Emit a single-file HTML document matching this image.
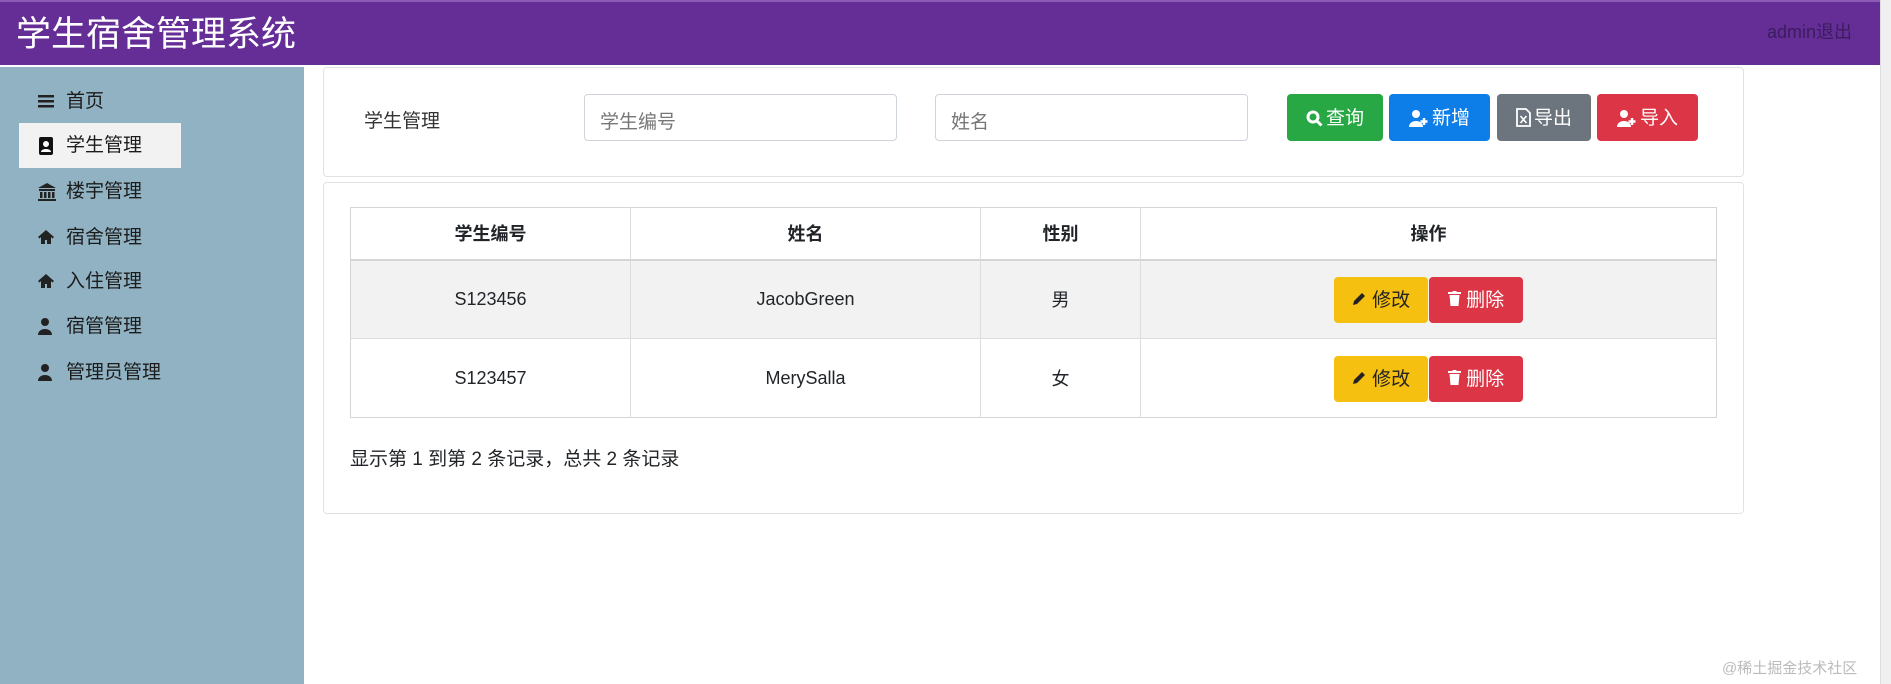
<!DOCTYPE html>
<html><head><meta charset="utf-8">
<style>
*{box-sizing:border-box;margin:0;padding:0}
body{width:1891px;height:684px;overflow:hidden;background:#fff;font-family:"Liberation Sans","Noto Sans CJK SC",sans-serif;position:relative;color:#212529}
.hdr{position:absolute;left:0;top:0;width:1880px;height:65px;background:#652e97;border-top:2px solid #8a5ab5}
.title{position:absolute;left:16px;top:12px;font-size:35px;color:#fff;line-height:42px}
.admin{position:absolute;left:1767px;top:16px;font-size:18px;color:#3b1c5e}
.rs{position:absolute;left:1880px;top:0;width:11px;height:684px;background:#f0f0f0;border-left:1px solid #ddd}
.side{position:absolute;left:0;top:67px;width:304px;height:617px;background:#90b2c2}
.mi{position:absolute;left:19px;height:45px;width:162px;font-size:19px;line-height:45px;padding-left:47px;color:#1c1c1c}
.mi.act{background:#f2f2f2}
.mi svg{position:absolute;left:19px;top:14px}
.panel{position:absolute;left:323px;width:1421px;border:1px solid #e2e2e2;border-radius:4px;background:#fff}
.lbl{position:absolute;left:364px;top:106px;font-size:19px;color:#333}
.inp{position:absolute;top:94px;height:47px;width:313px;border:1px solid #ced4da;border-radius:4px;font-size:19px;color:#777;padding:12px 15px}
.btn{position:absolute;height:47px;border-radius:4px;color:#fff;font-size:19px;line-height:50px;text-align:center}
.btn svg{vertical-align:-3px;margin-right:3px}
table{position:absolute;left:350px;top:207px;width:1367px;border-collapse:collapse;border:1px solid #d5d5d5;font-size:18px}
th,td{border-left:1px solid #ddd;text-align:center}
th{height:52px;font-weight:bold;border-bottom:2px solid #d5d5d5}
td{height:79px;border-top:1px solid #ddd}
tr.g td{background:#f2f2f2}
.sb{position:absolute;height:46px;width:94px;border-radius:4px;font-size:19px;line-height:48px;text-align:center}
.foot{position:absolute;left:350px;top:444px;font-size:19px}
.wm{position:absolute;left:1722px;top:657px;font-size:15px;color:#bbb}
</style></head><body>
<div class="hdr"><div class="title">学生宿舍管理系统</div><div class="admin">admin退出</div></div>
<div class="rs"></div>
<div class="side">
<div class="mi" style="top:12px"><svg width="16" height="16" viewBox="0 0 16 16"><rect x="0" y="2" width="16" height="2.5" fill="#222"/><rect x="0" y="7" width="16" height="2.5" fill="#222"/><rect x="0" y="12" width="16" height="2.5" fill="#222"/></svg>首页</div>
<div class="mi act" style="top:56px"><svg width="16" height="18" viewBox="0 0 16 18"><rect x="1" y="0" width="14" height="18" rx="2" fill="#111"/><circle cx="8" cy="7" r="3" fill="#fff"/><path d="M3 15c0-4 10-4 10 0z" fill="#fff"/></svg>学生管理</div>
<div class="mi" style="top:102px"><svg width="18" height="18" viewBox="0 0 18 18"><path d="M9 0L0 5h18z" fill="#222"/><rect x="1" y="6" width="16" height="2" fill="#222"/><rect x="2" y="9" width="2.5" height="6" fill="#222"/><rect x="6" y="9" width="2.5" height="6" fill="#222"/><rect x="10" y="9" width="2.5" height="6" fill="#222"/><rect x="14" y="9" width="2.5" height="6" fill="#222"/><rect x="0" y="16" width="18" height="2" fill="#222"/></svg>楼宇管理</div>
<div class="mi" style="top:148px"><svg width="16" height="16" viewBox="0 0 16 16"><path d="M8 1L0 8l1.5 1.5L3 8v7h4v-4h2v4h4V8l1.5 1.5L16 8z" fill="#222"/></svg>宿舍管理</div>
<div class="mi" style="top:192px"><svg width="16" height="16" viewBox="0 0 16 16"><path d="M8 1L0 8l1.5 1.5L3 8v7h4v-4h2v4h4V8l1.5 1.5L16 8z" fill="#222"/></svg>入住管理</div>
<div class="mi" style="top:237px"><svg width="14" height="17" viewBox="0 0 14 17"><circle cx="7" cy="4" r="4" fill="#222"/><path d="M0 17c0-8 14-8 14 0z" fill="#222"/></svg>宿管管理</div>
<div class="mi" style="top:283px"><svg width="14" height="17" viewBox="0 0 14 17"><circle cx="7" cy="4" r="4" fill="#222"/><path d="M0 17c0-8 14-8 14 0z" fill="#222"/></svg>管理员管理</div>
</div>
<div class="panel" style="top:67px;height:110px"></div>
<div class="lbl">学生管理</div>
<div class="inp" style="left:584px">学生编号</div>
<div class="inp" style="left:935px">姓名</div>
<div class="btn" style="left:1287px;top:94px;width:96px;background:#28a745"><svg width="17" height="17" viewBox="0 0 17 17"><circle cx="7" cy="7" r="5" fill="none" stroke="#fff" stroke-width="3"/><path d="M10.5 10.5l5 5" stroke="#fff" stroke-width="3"/></svg>查询</div>
<div class="btn" style="left:1389px;top:94px;width:101px;background:#0d7ee8"><svg width="20" height="17" viewBox="0 0 20 17"><circle cx="7" cy="4" r="4" fill="#fff"/><path d="M0 17c0-8 14-8 14 0z" fill="#fff"/><path d="M15 8v7M11.5 11.5h7" stroke="#fff" stroke-width="2.5"/></svg>新增</div>
<div class="btn" style="left:1497px;top:94px;width:94px;background:#6c757d"><svg width="15" height="19" viewBox="0 0 15 19"><path d="M1 1h9l4 4v13H1z" fill="none" stroke="#fff" stroke-width="1.8"/><path d="M4.5 8l6 7M10.5 8l-6 7" stroke="#fff" stroke-width="1.6"/></svg>导出</div>
<div class="btn" style="left:1597px;top:94px;width:101px;background:#dc3545"><svg width="20" height="17" viewBox="0 0 20 17"><circle cx="7" cy="4" r="4" fill="#fff"/><path d="M0 17c0-8 14-8 14 0z" fill="#fff"/><path d="M15 8v7M11.5 11.5h7" stroke="#fff" stroke-width="2.5"/></svg>导入</div>
<div class="panel" style="top:182px;height:332px"></div>
<table>
<tr><th style="width:280px;border-left:none">学生编号</th><th style="width:350px">姓名</th><th style="width:160px">性别</th><th>操作</th></tr>
<tr class="g"><td style="border-left:none">S123456</td><td>JacobGreen</td><td>男</td><td></td></tr>
<tr><td style="border-left:none">S123457</td><td>MerySalla</td><td>女</td><td></td></tr>
</table>
<div class="sb" style="left:1334px;top:277px;background:#f5c010;color:#222"><svg width="15" height="15" viewBox="0 0 15 15"><path d="M1 14l1-4 8-8 3 3-8 8z" fill="#222"/></svg> 修改</div>
<div class="sb" style="left:1429px;top:277px;background:#dc3545;color:#fff"><svg width="13" height="15" viewBox="0 0 13 15"><rect x="0" y="1" width="13" height="2" fill="#fff"/><rect x="4.5" y="0" width="4" height="2" fill="#fff"/><path d="M1.5 4h10l-1 11h-8z" fill="#fff"/></svg> 删除</div>
<div class="sb" style="left:1334px;top:356px;background:#f5c010;color:#222"><svg width="15" height="15" viewBox="0 0 15 15"><path d="M1 14l1-4 8-8 3 3-8 8z" fill="#222"/></svg> 修改</div>
<div class="sb" style="left:1429px;top:356px;background:#dc3545;color:#fff"><svg width="13" height="15" viewBox="0 0 13 15"><rect x="0" y="1" width="13" height="2" fill="#fff"/><rect x="4.5" y="0" width="4" height="2" fill="#fff"/><path d="M1.5 4h10l-1 11h-8z" fill="#fff"/></svg> 删除</div>
<div class="foot">显示第 1 到第 2 条记录，总共 2 条记录</div>
<div class="wm">@稀土掘金技术社区</div>
</body></html>
